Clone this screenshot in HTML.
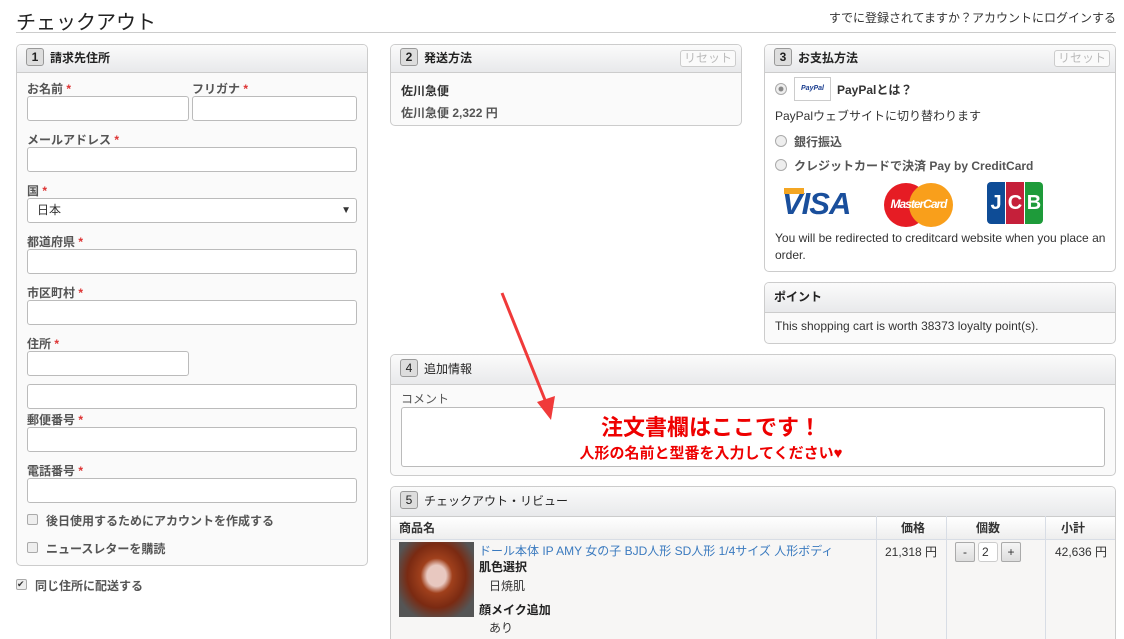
<!DOCTYPE html>
<html style="overflow:hidden;height:639px"><head><meta charset="utf-8"><style>
*{box-sizing:border-box;margin:0;padding:0}
body{width:1124px;height:639px;overflow:hidden;background:#fff;font-family:"Liberation Sans","Noto Sans CJK JP",sans-serif;font-size:12px;color:#333;position:relative}
.a{position:absolute}
.panel{position:absolute;border:1px solid #ccc;border-radius:5px;background:#fafafa;overflow:hidden}
.hd{height:28px;background:linear-gradient(#fbfbfb,#e8e9eb);border-bottom:1px solid #ccc;font-weight:bold;font-size:12px;line-height:27px;padding-left:9px;color:#222}
.bd{display:inline-block;width:18px;height:18px;border:1px solid #999;border-radius:3px;background:#ddd;text-align:center;line-height:16px;font-weight:bold;margin-right:6px;vertical-align:1px;font-size:12px}
.lbl{position:absolute;font-weight:bold;color:#555;font-size:12px}
.lbl i{color:#d33;font-style:normal}
.in{position:absolute;height:25px;border:1px solid #bbb;border-radius:3px;background:#fff}
.rs{position:absolute;border:1px solid #ccc;border-radius:3px;color:#bbb;font-size:12px;padding:0 3px;line-height:15px;background:#fafafa}
.cb{position:absolute;width:11px;height:11px;border:1px solid #aaa;border-radius:2px;background:#eee}
.rd{position:absolute;width:12px;height:12px;border:1px solid #aaa;border-radius:50%;background:#eee}
</style></head><body>
<div class="a" style="left:16px;top:6px;font-size:20px;color:#222">チェックアウト</div>
<div class="a" style="right:8px;top:9px;font-size:12px;color:#333">すでに登録されてますか？アカウントにログインする</div>
<div class="a" style="left:16px;top:32px;width:1100px;height:1px;background:#ccc"></div>

<div class="panel" style="left:16px;top:44px;width:352px;height:522px">
<div class="hd"><span class="bd">1</span>請求先住所</div>
</div>
<div class="lbl" style="left:27px;top:80px">お名前 <i>*</i></div>
<div class="lbl" style="left:192px;top:80px">フリガナ <i>*</i></div>
<div class="in" style="left:27px;top:96px;width:162px"></div>
<div class="in" style="left:192px;top:96px;width:165px"></div>
<div class="lbl" style="left:27px;top:131px">メールアドレス <i>*</i></div>
<div class="in" style="left:27px;top:147px;width:330px"></div>
<div class="lbl" style="left:27px;top:182px">国 <i>*</i></div>
<div class="in" style="left:27px;top:198px;width:330px;line-height:23px;padding-left:9px">日本<span style="position:absolute;right:5px;font-size:10px">▼</span></div>
<div class="lbl" style="left:27px;top:233px">都道府県 <i>*</i></div>
<div class="in" style="left:27px;top:249px;width:330px"></div>
<div class="lbl" style="left:27px;top:284px">市区町村 <i>*</i></div>
<div class="in" style="left:27px;top:300px;width:330px"></div>
<div class="lbl" style="left:27px;top:335px">住所 <i>*</i></div>
<div class="in" style="left:27px;top:351px;width:162px"></div>
<div class="in" style="left:27px;top:384px;width:330px"></div>
<div class="lbl" style="left:27px;top:411px">郵便番号 <i>*</i></div>
<div class="in" style="left:27px;top:427px;width:330px"></div>
<div class="lbl" style="left:27px;top:462px">電話番号 <i>*</i></div>
<div class="in" style="left:27px;top:478px;width:330px"></div>
<div class="cb" style="left:27px;top:514px"></div>
<div class="lbl" style="left:46px;top:512px">後日使用するためにアカウントを作成する</div>
<div class="cb" style="left:27px;top:542px"></div>
<div class="lbl" style="left:46px;top:540px">ニュースレターを購読</div>
<div class="cb" style="left:16px;top:579px;font-size:9px;line-height:9px;color:#333">✔</div>
<div class="lbl" style="left:35px;top:577px">同じ住所に配送する</div>

<div class="panel" style="left:390px;top:44px;width:352px;height:82px">
<div class="hd"><span class="bd">2</span>発送方法</div>
<div style="padding:7px 10px;font-weight:bold;color:#333;line-height:22px">佐川急便<br><span style="color:#555">佐川急便 2,322 円</span></div>
</div>
<div class="rs" style="left:680px;top:50px">リセット</div>

<div class="panel" style="left:764px;top:44px;width:352px;height:228px;background:#fff">
<div class="hd"><span class="bd">3</span>お支払方法</div>
</div>
<div class="rs" style="left:1054px;top:50px">リセット</div>
<div class="rd" style="left:775px;top:83px;background:radial-gradient(#888 30%,#eee 40%)"></div>
<div class="a" style="left:794px;top:77px;width:37px;height:24px;border:1px solid #ccc;background:#fff;font-size:7px;font-weight:bold;font-style:italic;color:#1a3d8f;text-align:center;line-height:22px">PayPal</div>
<div class="a" style="left:837px;top:81px;font-weight:bold">PayPalとは？</div>
<div class="a" style="left:775px;top:107px">PayPalウェブサイトに切り替わります</div>
<div class="rd" style="left:775px;top:135px"></div>
<div class="lbl" style="left:794px;top:133px">銀行振込</div>
<div class="rd" style="left:775px;top:159px"></div>
<div class="lbl" style="left:794px;top:157px">クレジットカードで決済 Pay by CreditCard</div>
<div class="a" style="left:782px;top:186px;font-size:31px;font-weight:bold;font-style:italic;color:#1a4f9c;letter-spacing:-1px">VISA</div>
<div class="a" style="left:784px;top:188px;width:20px;height:6px;background:#f4a623"></div>
<div class="a" style="left:884px;top:183px;width:44px;height:44px;border-radius:50%;background:#e61c24"></div>
<div class="a" style="left:909px;top:183px;width:44px;height:44px;border-radius:50%;background:#f99f1b"></div>
<div class="a" style="left:884px;top:197px;width:69px;text-align:center;color:#fff;font-weight:bold;font-style:italic;font-size:12px;letter-spacing:-1px">MasterCard</div>
<div class="a" style="left:987px;top:182px;width:18px;height:42px;background:#0e4c96;border-radius:4px 0 0 4px;color:#fff;font-weight:bold;font-size:20px;text-align:center;line-height:42px">J</div>
<div class="a" style="left:1006px;top:182px;width:18px;height:42px;background:#c5203a;color:#fff;font-weight:bold;font-size:20px;text-align:center;line-height:42px">C</div>
<div class="a" style="left:1025px;top:182px;width:18px;height:42px;background:#1e9b3a;border-radius:0 4px 4px 0;color:#fff;font-weight:bold;font-size:20px;text-align:center;line-height:42px">B</div>
<div class="a" style="left:775px;top:230px;width:335px;line-height:17px;color:#333">You will be redirected to creditcard website when you place an order.</div>

<div class="panel" style="left:764px;top:282px;width:352px;height:62px">
<div class="hd" style="height:30px;line-height:29px">ポイント</div>
<div style="padding:6px 10px;font-size:12px">This shopping cart is worth 38373 loyalty point(s).</div>
</div>

<div class="panel" style="left:390px;top:354px;width:726px;height:122px">
<div class="hd" style="height:30px;line-height:29px;font-weight:normal"><span class="bd" style="font-weight:normal">4</span>追加情報</div>
</div>
<div class="a" style="left:401px;top:390px;color:#555">コメント</div>
<div class="in" style="left:401px;top:407px;width:704px;height:60px"></div>
<div class="a" style="left:401px;top:410px;width:620px;text-align:center;color:#e00;font-weight:bold;font-size:22px">注文書欄はここです！</div>
<div class="a" style="left:401px;top:442px;width:620px;text-align:center;color:#e00;font-weight:bold;font-size:15px">人形の名前と型番を入力してください♥</div>
<svg class="a" style="left:495px;top:290px" width="70" height="135"><line x1="7" y1="3" x2="50" y2="110" stroke="#f03a3a" stroke-width="3"/><polygon points="42,112 60,106 56,130" fill="#f03a3a"/></svg>

<div class="panel" style="left:390px;top:486px;width:726px;height:170px;background:#f7f6f5">
<div class="hd" style="height:30px;line-height:29px;font-weight:normal"><span class="bd" style="font-weight:normal">5</span>チェックアウト・リビュー</div>
<div style="height:23px;background:linear-gradient(#fff,#eee);border-bottom:1px solid #d8dde5;font-weight:bold;line-height:22px;position:relative">
<span style="position:absolute;left:8px">商品名</span><span style="position:absolute;left:510px">価格</span><span style="position:absolute;left:585px">個数</span><span style="position:absolute;left:670px">小計</span></div>
</div>
<div class="a" style="left:876px;top:516px;width:1px;height:123px;background:#d8dde5"></div>
<div class="a" style="left:946px;top:516px;width:1px;height:123px;background:#d8dde5"></div>
<div class="a" style="left:1045px;top:516px;width:1px;height:123px;background:#d8dde5"></div>
<div class="a" style="left:399px;top:542px;width:75px;height:75px;background:radial-gradient(ellipse at 50% 45%,#e8c8c0 18%,#a0401c 30%,#7a2a12 55%,#555 80%)"></div>
<div class="a" style="left:479px;top:542px;color:#3a7abf;font-size:12px">ドール本体 IP AMY 女の子 BJD人形 SD人形 1/4サイズ 人形ボディ</div>
<div class="a" style="left:479px;top:558px;font-weight:bold;color:#222">肌色選択</div>
<div class="a" style="left:489px;top:577px">日焼肌</div>
<div class="a" style="left:479px;top:601px;font-weight:bold;color:#222">顔メイク追加</div>
<div class="a" style="left:489px;top:619px">あり</div>
<div class="a" style="left:885px;top:543px">21,318 円</div>
<div class="a" style="left:955px;top:542px;width:20px;height:20px;border:1px solid #aaa;border-radius:2px;background:linear-gradient(#f5f5f5,#ddd);text-align:center;line-height:18px">-</div>
<div class="a" style="left:978px;top:542px;width:20px;height:20px;border:1px solid #ccc;border-radius:3px;background:#fff;line-height:18px;padding-left:3px">2</div>
<div class="a" style="left:1001px;top:542px;width:20px;height:20px;border:1px solid #aaa;border-radius:2px;background:linear-gradient(#f5f5f5,#ddd);text-align:center;line-height:18px">+</div>
<div class="a" style="left:1055px;top:543px">42,636 円</div>
</body></html>
